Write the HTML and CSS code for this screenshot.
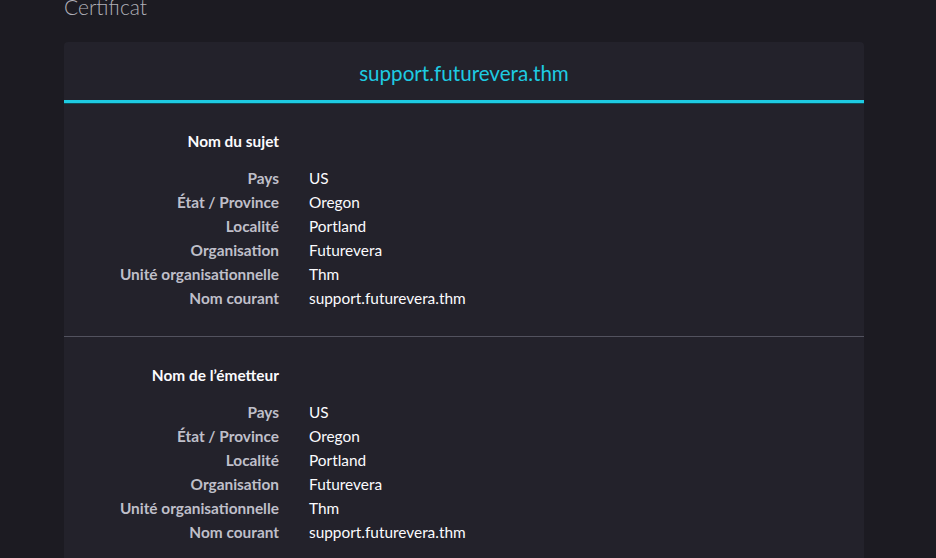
FILE: index.html
```html
<!DOCTYPE html>
<html lang="fr">
<head>
<meta charset="utf-8">
<title>Certificat</title>
<link rel="stylesheet" href="styles.css">
</head>
<body>
<main class="page">
  <h1 class="title">Certificat</h1>
  <section class="card">
    <div class="tab">support.futurevera.thm</div>
    <div class="section">
      <div class="grid">
        <div class="heading">Nom du sujet</div><div></div>
        <div class="label">Pays</div><div class="value">US</div>
        <div class="label">État / Province</div><div class="value">Oregon</div>
        <div class="label">Localité</div><div class="value">Portland</div>
        <div class="label">Organisation</div><div class="value">Futurevera</div>
        <div class="label">Unité organisationnelle</div><div class="value">Thm</div>
        <div class="label">Nom courant</div><div class="value">support.futurevera.thm</div>
      </div>
    </div>
    <div class="section">
      <div class="grid">
        <div class="heading">Nom de l’émetteur</div><div></div>
        <div class="label">Pays</div><div class="value">US</div>
        <div class="label">État / Province</div><div class="value">Oregon</div>
        <div class="label">Localité</div><div class="value">Portland</div>
        <div class="label">Organisation</div><div class="value">Futurevera</div>
        <div class="label">Unité organisationnelle</div><div class="value">Thm</div>
        <div class="label">Nom courant</div><div class="value">support.futurevera.thm</div>
      </div>
    </div>
  </section>
</main>
</body>
</html>
```
FILE: styles.css
```css
html, body {
  margin: 0;
  padding: 0;
  background: #1c1b22;
  height: 100%;
  overflow: hidden;
}
body {
  font-family: Lato, "Noto Sans", sans-serif;
  font-size: 15.4px;
  color: #fbfbfe;
}
.page {
  padding-left: 64px;
  width: 800px;
}
.title {
  margin: -13px 0 0 0;
  height: 55px;
  font-size: 21px;
  font-weight: 300;
  line-height: 40px;
  color: #b0b0b8;
}
.card {
  background: #23222b;
  border-radius: 4px 4px 0 0;
}
.tab {
  height: 58px;
  line-height: 62px;
  text-align: center;
  font-size: 20.6px;
  color: #1ecbe2;
  border-bottom: 3px solid #1ecbe2;
  box-shadow: 0 1px 0 #0f4e58;
}
.section {
  padding: 26px 0 26px;
}
.section + .section {
  border-top: 1px solid #52525e;
  padding-top: 26px;
}
.grid {
  display: grid;
  grid-template-columns: 215px 1fr;
  column-gap: 30px;
  line-height: 24px;
}
.heading {
  text-align: right;
  font-weight: 700;
  color: #fbfbfe;
  margin-bottom: 13px;
}
.label {
  text-align: right;
  font-weight: 700;
  color: #bfbfc9;
}
.value {
  color: #fbfbfe;
}
```
